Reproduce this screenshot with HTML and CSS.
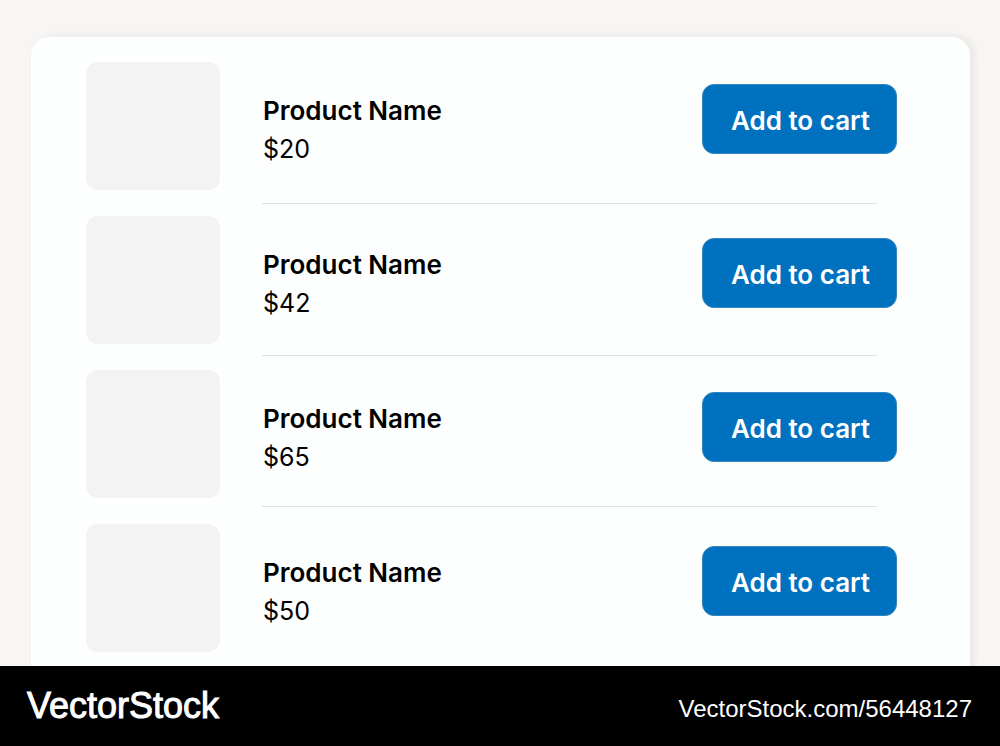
FILE: index.html
```html
<!DOCTYPE html>
<html lang="en">
<head>
    <meta charset="UTF-8">
    <meta name="viewport" content="width=device-width, initial-scale=1.0">
    <title>Products</title>
    <link rel="stylesheet" href="styles.css">
</head>
<body>
    <main>
        <ul class="products">
            <li class="product">
                <div class="thumb"></div>
                <div class="info">
                    <h2>Product Name</h2>
                    <p>$20</p>
                </div>
                <button type="button">Add to cart</button>
                <hr>
            </li>
            <li class="product">
                <div class="thumb"></div>
                <div class="info">
                    <h2>Product Name</h2>
                    <p>$42</p>
                </div>
                <button type="button">Add to cart</button>
                <hr>
            </li>
            <li class="product">
                <div class="thumb"></div>
                <div class="info">
                    <h2>Product Name</h2>
                    <p>$65</p>
                </div>
                <button type="button">Add to cart</button>
                <hr>
            </li>
            <li class="product">
                <div class="thumb"></div>
                <div class="info">
                    <h2>Product Name</h2>
                    <p>$50</p>
                </div>
                <button type="button">Add to cart</button>
            </li>
        </ul>
    </main>
    <footer>
        <span class="brand">VectorStock</span>
        <span class="source">VectorStock.com/56448127</span>
    </footer>
</body>
</html>
```
FILE: styles.css
```css
* {
    box-sizing: border-box;
    margin: 0;
    padding: 0;
}
body {
    display: flex;
    flex-direction: column;
    min-height: 100vh;
    background-color: #f7f6f5;
    color: #000;
    font-family: Inter, "Liberation Sans", sans-serif;
}
main {
    flex: 1;
    padding: 37px 30px 0 31px;
}
.products {
    height: 100%;
    padding: 25px 73px 14px 55px;
    list-style: none;
    background-color: #fdfefe;
    border-radius: 18px 18px 0 0;
    box-shadow: 4px 0 5px 2px #edeae7;
}
.product {
    display: grid;
    grid-template-columns: 134px 1fr 195px;
    column-gap: 42px;
}
.product + .product {
    padding-top: 12px;
}
.product:nth-child(3) {
    padding-top: 14px;
}
.product:nth-child(4) {
    padding-top: 17px;
}
.thumb {
    height: 128px;
    background-color: #f3f3f3;
    border-radius: 12px;
}
.info {
    padding-top: 31px;
    padding-left: 1px;
}
.info h2 {
    font-size: 26px;
    font-weight: 600;
    line-height: 36px;
}
.info p {
    font-size: 25px;
    line-height: 40px;
}
.product button {
    height: 70px;
    margin-top: 22px;
    padding-top: 2px;
    padding-left: 2px;
    border: 1px solid #3585bf;
    border-radius: 12px;
    background-color: #0071be;
    color: #fff;
    font-family: inherit;
    font-size: 26px;
    font-weight: 600;
}
.product hr {
    grid-column: 2 / 4;
    margin: 13px 20px 0 0;
    border: 0;
    border-top: 1px solid #dce2e2;
}
.product:nth-child(2) hr {
    margin-top: 11px;
}
.product:nth-child(3) hr {
    margin-top: 8px;
}
footer {
    display: flex;
    justify-content: space-between;
    align-items: center;
    position: relative;
    height: 80px;
    padding: 0 28px 0 27px;
    background-color: #000;
    color: #fff;
    font-family: "Liberation Sans", Arial, sans-serif;
}
.brand {
    font-size: 36px;
    -webkit-text-stroke: 1px #fff;
}
.source {
    padding-top: 6px;
    font-size: 24px;
}
```
